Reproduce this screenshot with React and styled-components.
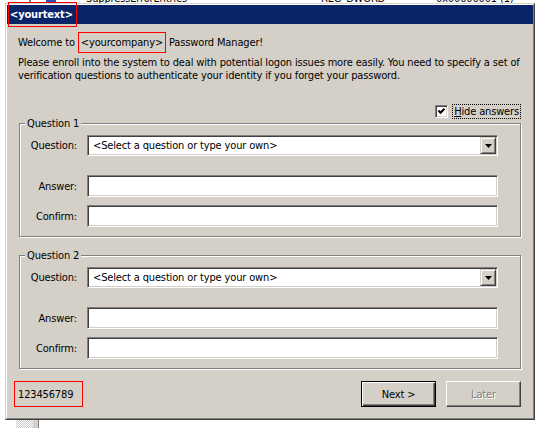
import React from 'react';
import styled, { createGlobalStyle } from 'styled-components';

const GlobalStyle = createGlobalStyle`
  html, body {
    margin: 0;
    padding: 0;
    background: #fff;
  }
  body {
    width: 546px;
    height: 428px;
    overflow: hidden;
    font-family: Tahoma, "DejaVu Sans Condensed", "Liberation Sans", sans-serif;
    font-size: 11px;
    line-height: 13px;
    letter-spacing: -0.15px;
    color: #000;
  }
`;

// registry editor peeking out above the dialog
const BackStrip = styled.div`
  height: 3px;
  overflow: hidden;
  display: flex;
  align-items: flex-end;
  white-space: nowrap;
`;

const BackRow = styled.div`
  display: flex;
  align-items: center;
  height: 13px;
  margin-bottom: -2px;
  padding-left: 29px;
`;

const BackDivider = styled.span`
  width: 2px;
  height: 13px;
  background: #808080;
  margin-right: 15px;
`;

const BackIcon = styled.span`
  width: 10px;
  height: 13px;
  background: #2b4fb8;
  margin-right: 30px;
`;

const BackCell = styled.span`
  width: ${(p) => p.$width}px;
`;

const Frame = styled.div`
  box-sizing: border-box;
  width: 530px;
  margin-left: 5px;
  border: 1px solid;
  border-color: #d4d0c8 #404040 #404040 #d4d0c8;
  background: #d4d0c8;
`;

const FrameInner = styled.div`
  border: 1px solid;
  border-color: #fff #808080 #808080 #fff;
`;

const TitleBar = styled.div`
  height: 19px;
  display: flex;
  align-items: center;
  background: #0a246a;
`;

const TitleText = styled.span`
  position: relative;
  margin-left: 1px;
  padding: 5px 3px 5px 1px;
  border: 1px solid #ff0000;
  color: #fff;
  font-weight: bold;
`;

const Content = styled.div`
  padding: 8px 12px 11px 11px;
`;

const Welcome = styled.div`
  line-height: 21px;
  white-space: nowrap;
`;

const Marked = styled.span`
  display: inline-block;
  vertical-align: top;
  line-height: 13px;
  padding: 3px 2px;
  border: 1px solid #ff0000;
`;

const Intro = styled.p`
  margin: 3px 0 0;
  white-space: nowrap;
`;

const CheckRow = styled.div`
  margin-top: 22px;
  height: 15px;
  display: flex;
  justify-content: flex-end;
  align-items: center;
  gap: 4px;
`;

const CheckBox = styled.span`
  box-sizing: border-box;
  width: 13px;
  height: 13px;
  display: flex;
  align-items: center;
  justify-content: center;
  background: #fff;
  border: 1px solid;
  border-color: #808080 #fff #fff #808080;
  box-shadow: inset 1px 1px 0 #404040, inset -1px -1px 0 #d4d0c8;
`;

const CheckLabel = styled.span`
  border: 1px dotted #000;
  padding: 0 1px;
  line-height: 13px;
`;

const Group = styled.fieldset`
  margin: ${(p) => (p.$first ? '-2px' : '12px')} 0 0 1px;
  padding: 5px 22px 9px 8px;
  min-width: 0;
  border: 1px solid #808080;
  box-shadow: inset 1px 1px 0 #fff, 1px 1px 0 #fff;
`;

const Legend = styled.legend`
  margin-left: -3px;
  padding: 0 2px;
  line-height: 13px;
  background: #d4d0c8;
`;

const Grid = styled.div`
  display: grid;
  grid-template-columns: 49px 1fr;
  column-gap: 10px;
  align-items: center;
`;

const FieldLabel = styled.span`
  text-align: right;
  margin-top: ${(p) => p.$gap || 0}px;
`;

const sunken = `
  box-sizing: border-box;
  border: 1px solid;
  border-color: #808080 #fff #fff #808080;
  box-shadow: inset 1px 1px 0 #404040, inset -1px -1px 0 #d4d0c8;
  background: #fff;
`;

const Combo = styled.div`
  ${sunken}
  height: 21px;
  display: flex;
  align-items: center;
  padding: 2px 1px 2px 5px;
`;

const ComboText = styled.span`
  flex: 1;
  white-space: nowrap;
`;

const DropButton = styled.span`
  box-sizing: border-box;
  width: 16px;
  height: 17px;
  display: flex;
  align-items: center;
  justify-content: center;
  background: #d4d0c8;
  border: 1px solid;
  border-color: #d4d0c8 #404040 #404040 #d4d0c8;
  box-shadow: inset 1px 1px 0 #fff, inset -1px -1px 0 #808080;
`;

const TextField = styled.div`
  ${sunken}
  height: 22px;
  margin-top: ${(p) => p.$gap || 0}px;
`;

const Footer = styled.div`
  margin-top: 12px;
  display: flex;
  align-items: center;
`;

const Serial = styled.span`
  box-sizing: border-box;
  width: 69px;
  height: 26px;
  margin-left: -4px;
  padding-left: 3px;
  display: flex;
  align-items: center;
  border: 1px solid #ff0000;
`;

const Buttons = styled.div`
  margin-left: auto;
  display: flex;
  gap: 10px;
`;

const Button = styled.button`
  box-sizing: border-box;
  width: 75px;
  height: 26px;
  padding: 0;
  font: inherit;
  letter-spacing: inherit;
  background: #d4d0c8;
  border: 1px solid;
  border-color: ${(p) => (p.$default ? '#000' : '#fff #404040 #404040 #fff')};
  box-shadow: ${(p) =>
    p.$default
      ? 'inset 1px 1px 0 #fff, inset -1px -1px 0 #404040, inset -2px -2px 0 #808080'
      : 'inset -1px -1px 0 #808080'};
  color: ${(p) => (p.disabled ? '#808080' : '#000')};
  text-shadow: ${(p) => (p.disabled ? '1px 1px 0 #fff' : 'none')};
`;

const BottomStrip = styled.div`
  height: 8px;
  display: flex;
  padding-left: 16px;
`;

const Dither = styled.span`
  width: 17px;
  background: repeating-conic-gradient(#c8c8c8 0 25%, #fff 0 50%) 0 0 / 2px 2px;
`;

const Splitter = styled.span`
  width: 5px;
  background: #d4d0c8;
  border-right: 1px solid #808080;
`;

function Arrow() {
  return (
    <svg width="7" height="4" viewBox="0 0 7 4">
      <path d="M0 0h7L3.5 4z" fill="#000" />
    </svg>
  );
}

function Tick() {
  return (
    <svg width="9" height="9" viewBox="0 0 9 9">
      <path d="M1.5 3.5l2 2.2 4-4" fill="none" stroke="#000" strokeWidth="2" />
    </svg>
  );
}

function QuestionGroup({ title, first }) {
  return (
    <Group $first={first}>
      <Legend>{title}</Legend>
      <Grid>
        <FieldLabel>Question:</FieldLabel>
        <Combo>
          <ComboText>&lt;Select a question or type your own&gt;</ComboText>
          <DropButton>
            <Arrow />
          </DropButton>
        </Combo>
        <FieldLabel $gap={19}>Answer:</FieldLabel>
        <TextField $gap={19} />
        <FieldLabel $gap={8}>Confirm:</FieldLabel>
        <TextField $gap={8} />
      </Grid>
    </Group>
  );
}

export default function App() {
  return (
    <>
      <GlobalStyle />
      <BackStrip>
        <BackRow>
          <BackDivider />
          <BackIcon />
          <BackCell $width={235}>SuppressErrorEntries</BackCell>
          <BackCell $width={115}>REG_DWORD</BackCell>
          <BackCell $width={90}>0x00000001 (1)</BackCell>
        </BackRow>
      </BackStrip>
      <Frame>
        <FrameInner>
          <TitleBar>
            <TitleText>&lt;yourtext&gt;</TitleText>
          </TitleBar>
          <Content>
            <Welcome>
              Welcome to <Marked>&lt;yourcompany&gt;</Marked> Password Manager!
            </Welcome>
            <Intro>
              Please enroll into the system to deal with potential logon issues more easily. You need to specify a set of
              <br />
              verification questions to authenticate your identity if you forget your password.
            </Intro>
            <CheckRow>
              <CheckBox>
                <Tick />
              </CheckBox>
              <CheckLabel>
                <u>H</u>ide answers
              </CheckLabel>
            </CheckRow>
            <QuestionGroup title="Question 1" first />
            <QuestionGroup title="Question 2" />
            <Footer>
              <Serial>123456789</Serial>
              <Buttons>
                <Button $default>Next &gt;</Button>
                <Button disabled>Later</Button>
              </Buttons>
            </Footer>
          </Content>
        </FrameInner>
      </Frame>
      <BottomStrip>
        <Dither />
        <Splitter />
      </BottomStrip>
    </>
  );
}
